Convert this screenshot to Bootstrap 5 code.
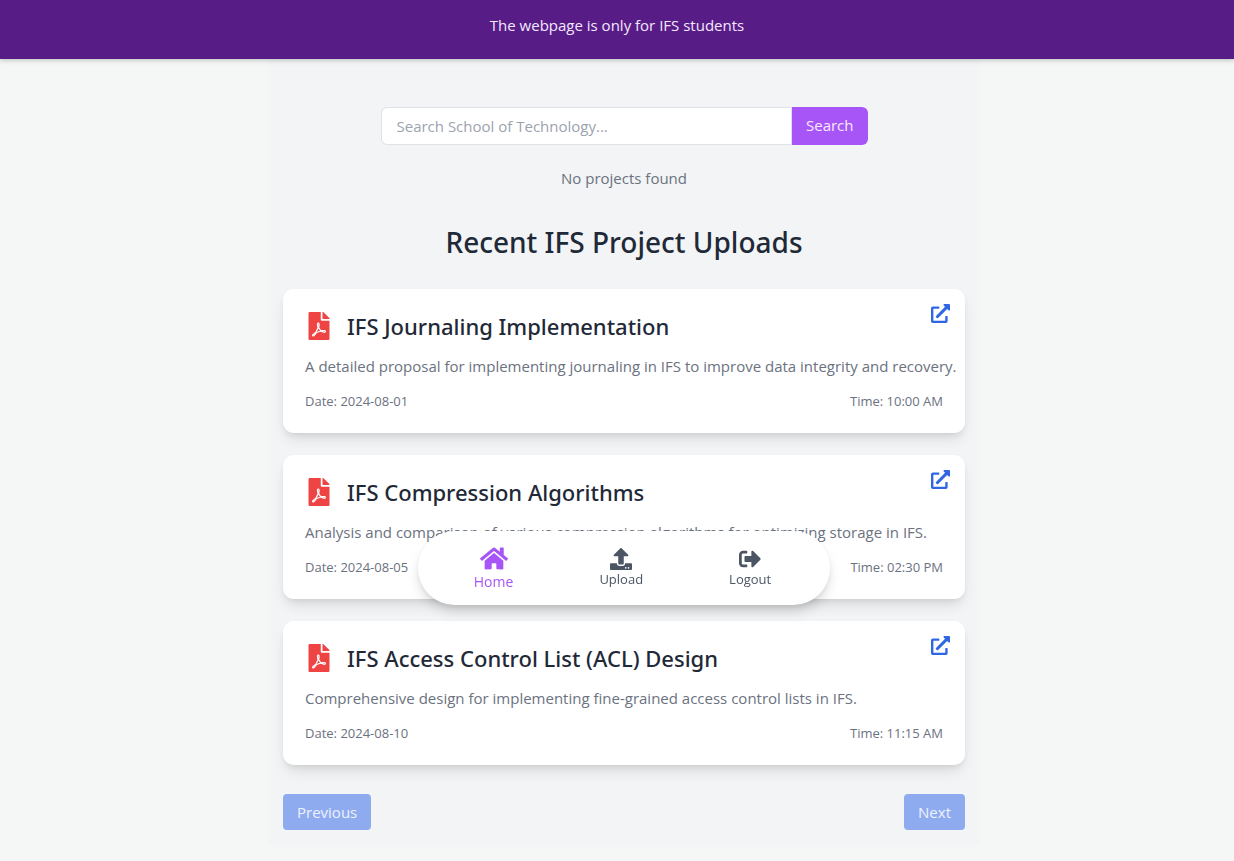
<!DOCTYPE html>
<html lang="en">
<head>
<meta charset="utf-8">
<meta name="viewport" content="width=device-width, initial-scale=1">
<title>IFS Projects</title>
<link href="https://cdn.jsdelivr.net/npm/bootstrap@5.3.0/dist/css/bootstrap.min.css" rel="stylesheet">
<style>
  body { font-family: "Open Sans", "Noto Sans", sans-serif; font-size: 15px; line-height: 22px; background: #f5f7f7; color: #6b7280; }
  .notice { background: #581c87; color: #f3e8ff; padding: 14px 15px 23px; box-shadow: 0 1px 5px rgba(0,0,0,.25); position: relative; }
  .page-wrap { padding-left: 14px; }
  .content-col { max-width: 712px; background: #f2f4f6; padding: 48px 15px 15px; }
  .search-form { max-width: 487px; }
  .search-form .form-control { height: 38px; padding: 7px 15px 8px; font-size: 15px; border: 1px solid #dfe2e6; border-radius: 6px 0 0 6px; }
  .search-form .form-control::placeholder { color: #9ca3af; }
  .btn-search { background: #a855f7; color: #f8ecff; font-size: 15px; line-height: 22px; padding: 7px 14px 9px; border: 0; border-radius: 0 6px 6px 0; }
  .btn-search:hover { background: #9333ea; color: #fff; }
  .no-results { margin: 22px 0 0; }
  .page-title { font-family: "Noto Sans", sans-serif; font-size: 28px; line-height: 34px; font-weight: 500; color: #1f2937; margin: 36px 0 30px; }
  .project { border: 0; border-radius: 11px; padding: 22px; box-shadow: 0 8px 14px -3px rgba(0,0,0,.12), 0 3px 6px -2px rgba(0,0,0,.08); }
  .project-list { gap: 22px; }
  .project-head { gap: 14px; margin-bottom: 14px; color: #ef4444; }
  .project-name { font-family: "Noto Sans", sans-serif; font-size: 22px; line-height: 30px; font-weight: 500; color: #1f2937; }
  @media (min-width: 768px) { .project-text { white-space: nowrap; } }
  .project-meta { font-size: 13px; line-height: 20px; margin-top: 14px; }
  .open-link { top: 15px; right: 15px; color: #2f66e3; line-height: 0; }
  .pager { margin-top: 29px; }
  .btn-page, .btn-page:disabled { background: #8fabf0; color: #edf2fd; opacity: 1; border: 0; border-radius: 4px; font-size: 15px; line-height: 22px; padding: 7px 14px; }
  .page-end { height: 16px; }
  .dock-wrap { bottom: 256px; padding-left: 14px; pointer-events: none; z-index: 10; }
  .dock { pointer-events: auto; background: #fff; max-width: 412px; height: 74px; padding-right: 3px; border-radius: 37px; gap: 86px; box-shadow: 0 8px 14px -3px rgba(0,0,0,.18), 0 2px 6px rgba(0,0,0,.06); }
  .dock a { color: #4b5563; font-size: 13px; line-height: 17px; text-decoration: none; gap: 1px; }
  .dock a.current { color: #a855f7; font-size: 14px; line-height: 18px; gap: 2px; }
  svg { fill: currentColor; flex: none; }
</style>
</head>
<body>
<svg class="d-none" aria-hidden="true">
  <symbol id="i-pdf" viewBox="0 0 384 512"><path d="M181.9 256.1c-5-16-4.9-46.9-2-46.9 8.4 0 7.6 36.9 2 46.9zm-1.7 47.2c-7.7 20.2-17.3 43.3-28.4 62.7 18.3-7 39-17.2 62.9-21.9-12.7-9.6-24.9-23.4-34.5-40.8zM86.1 428.1c0 .8 13.2-5.4 34.9-40.2-6.7 6.3-29.1 24.5-34.9 40.2zM248 160h136v328c0 13.3-10.7 24-24 24H24c-13.3 0-24-10.7-24-24V24C0 10.7 10.7 0 24 0h200v136c0 13.2 10.8 24 24 24zm-8 171.8c-20-12.2-33.3-29-42.7-53.8 4.5-18.5 11.6-46.6 6.2-64.2-4.7-29.4-42.4-26.5-47.8-6.8-5 18.3-.4 44.1 8.1 77-11.6 27.6-28.7 64.6-40.8 85.8-.1 0-.1.1-.2.1-27.1 13.9-73.6 44.5-54.5 68 5.6 6.9 16 10 21.5 10 17.9 0 35.7-18 61.1-61.8 25.8-8.5 54.1-19.1 79-23.2 21.7 11.8 47.1 19.5 64 19.5 29.2 0 31.2-32 19.7-43.4-13.9-13.6-54.3-9.7-73.6-7.2zM377 105L279 7c-4.5-4.5-10.6-7-17-7h-6v128h128v-6.1c0-6.3-2.5-12.4-7-16.9zm-74.1 255.3c4.1-2.7-2.5-11.9-42.8-9 37.1 15.8 42.8 9 42.8 9z"/></symbol>
  <symbol id="i-open" viewBox="0 0 512 512"><path d="M432,320H400a16,16,0,0,0-16,16V448H64V128H208a16,16,0,0,0,16-16V80a16,16,0,0,0-16-16H48A48,48,0,0,0,0,112V464a48,48,0,0,0,48,48H400a48,48,0,0,0,48-48V336A16,16,0,0,0,432,320ZM488,0h-128c-21.37,0-32.05,25.91-17,41l35.73,35.73L135,320.37a24,24,0,0,0,0,34L157.67,377a24,24,0,0,0,34,0L435.28,133.32,471,169c15,15,41,4.5,41-17V24A24,24,0,0,0,488,0Z"/></symbol>
</svg>

<header class="notice text-center">The webpage is only for IFS students</header>

<div class="page-wrap">
  <main class="content-col mx-auto">
    <form class="search-form d-flex mx-auto" role="search">
      <input type="search" class="form-control" placeholder="Search School of Technology..." aria-label="Search School of Technology">
      <button type="submit" class="btn btn-search">Search</button>
    </form>
    <p class="no-results text-center">No projects found</p>
    <h1 class="page-title text-center">Recent IFS Project Uploads</h1>

    <div class="project-list d-flex flex-column">
      <article class="card project">
        <div class="project-head d-flex align-items-center">
          <svg width="28" height="28"><use href="#i-pdf"/></svg>
          <h2 class="project-name mb-0">IFS Journaling Implementation</h2>
        </div>
        <p class="project-text mb-0">A detailed proposal for implementing journaling in IFS to improve data integrity and recovery.</p>
        <div class="project-meta d-flex justify-content-between"><span>Date: 2024-08-01</span><span>Time: 10:00 AM</span></div>
        <a href="#" class="open-link position-absolute" aria-label="Open project"><svg width="19" height="19"><use href="#i-open"/></svg></a>
      </article>
      <article class="card project">
        <div class="project-head d-flex align-items-center">
          <svg width="28" height="28"><use href="#i-pdf"/></svg>
          <h2 class="project-name mb-0">IFS Compression Algorithms</h2>
        </div>
        <p class="project-text mb-0">Analysis and comparison of various compression algorithms for optimizing storage in IFS.</p>
        <div class="project-meta d-flex justify-content-between"><span>Date: 2024-08-05</span><span>Time: 02:30 PM</span></div>
        <a href="#" class="open-link position-absolute" aria-label="Open project"><svg width="19" height="19"><use href="#i-open"/></svg></a>
      </article>
      <article class="card project">
        <div class="project-head d-flex align-items-center">
          <svg width="28" height="28"><use href="#i-pdf"/></svg>
          <h2 class="project-name mb-0">IFS Access Control List (ACL) Design</h2>
        </div>
        <p class="project-text mb-0">Comprehensive design for implementing fine-grained access control lists in IFS.</p>
        <div class="project-meta d-flex justify-content-between"><span>Date: 2024-08-10</span><span>Time: 11:15 AM</span></div>
        <a href="#" class="open-link position-absolute" aria-label="Open project"><svg width="19" height="19"><use href="#i-open"/></svg></a>
      </article>
    </div>

    <div class="pager d-flex justify-content-between">
      <button type="button" class="btn btn-page" disabled>Previous</button>
      <button type="button" class="btn btn-page" disabled>Next</button>
    </div>
  </main>
  <div class="page-end"></div>
</div>

<div class="dock-wrap position-fixed start-0 end-0">
  <nav class="dock d-flex align-items-center justify-content-center mx-auto" aria-label="Main">
    <a href="#" class="current d-flex flex-column align-items-center" aria-current="page">
      <svg width="28" height="25" viewBox="0 0 576 512"><path d="M280.37 148.26L96 300.11V464a16 16 0 0 0 16 16l112.06-.29a16 16 0 0 0 15.92-16V368a16 16 0 0 1 16-16h64a16 16 0 0 1 16 16v95.64a16 16 0 0 0 16 16.05L464 480a16 16 0 0 0 16-16V300L295.67 148.26a12.19 12.19 0 0 0-15.3 0zM571.6 251.47L488 182.56V44.05a12 12 0 0 0-12-12h-56a12 12 0 0 0-12 12v72.61L318.47 43a48 48 0 0 0-61 0L4.34 251.47a12 12 0 0 0-1.6 16.9l25.5 31A12 12 0 0 0 45.15 301l235.22-193.74a12.19 12.19 0 0 1 15.3 0L530.9 301a12 12 0 0 0 16.9-1.6l25.5-31a12 12 0 0 0-1.7-16.93z"/></svg>
      <span>Home</span>
    </a>
    <a href="#" class="d-flex flex-column align-items-center">
      <svg width="22" height="22" viewBox="0 0 512 512"><path d="M296 384h-80c-13.3 0-24-10.7-24-24V192h-87.7c-17.8 0-26.7-21.5-14.1-34.1L242.3 5.7c7.5-7.5 19.8-7.5 27.3 0l152.2 152.2c12.6 12.6 3.7 34.1-14.1 34.1H320v168c0 13.3-10.7 24-24 24zm216-8v112c0 13.3-10.7 24-24 24H24c-13.3 0-24-10.7-24-24V376c0-13.3 10.7-24 24-24h136v8c0 30.9 25.1 56 56 56h80c30.9 0 56-25.1 56-56v-8h136c13.3 0 24 10.7 24 24zm-124 88c0-11-9-20-20-20s-20 9-20 20 9 20 20 20 20-9 20-20zm64 0c0-11-9-20-20-20s-20 9-20 20 9 20 20 20 20-9 20-20z"/></svg>
      <span>Upload</span>
    </a>
    <a href="#" class="d-flex flex-column align-items-center">
      <svg width="22" height="22" viewBox="0 0 512 512"><path d="M497 273L329 441c-15 15-41 4.5-41-17v-96H152c-13.3 0-24-10.7-24-24v-96c0-13.3 10.7-24 24-24h136V88c0-21.4 25.9-32 41-17l168 168c9.3 9.4 9.3 24.6 0 34zM192 436v-40c0-6.6-5.4-12-12-12H96c-17.7 0-32-14.3-32-32V160c0-17.7 14.3-32 32-32h84c6.6 0 12-5.4 12-12V76c0-6.6-5.4-12-12-12H96c-53 0-96 43-96 96v192c0 53 43 96 96 96h84c6.6 0 12-5.4 12-12z"/></svg>
      <span>Logout</span>
    </a>
  </nav>
</div>
<script src="https://cdn.jsdelivr.net/npm/bootstrap@5.3.0/dist/js/bootstrap.bundle.min.js"></script>
</body>
</html>
